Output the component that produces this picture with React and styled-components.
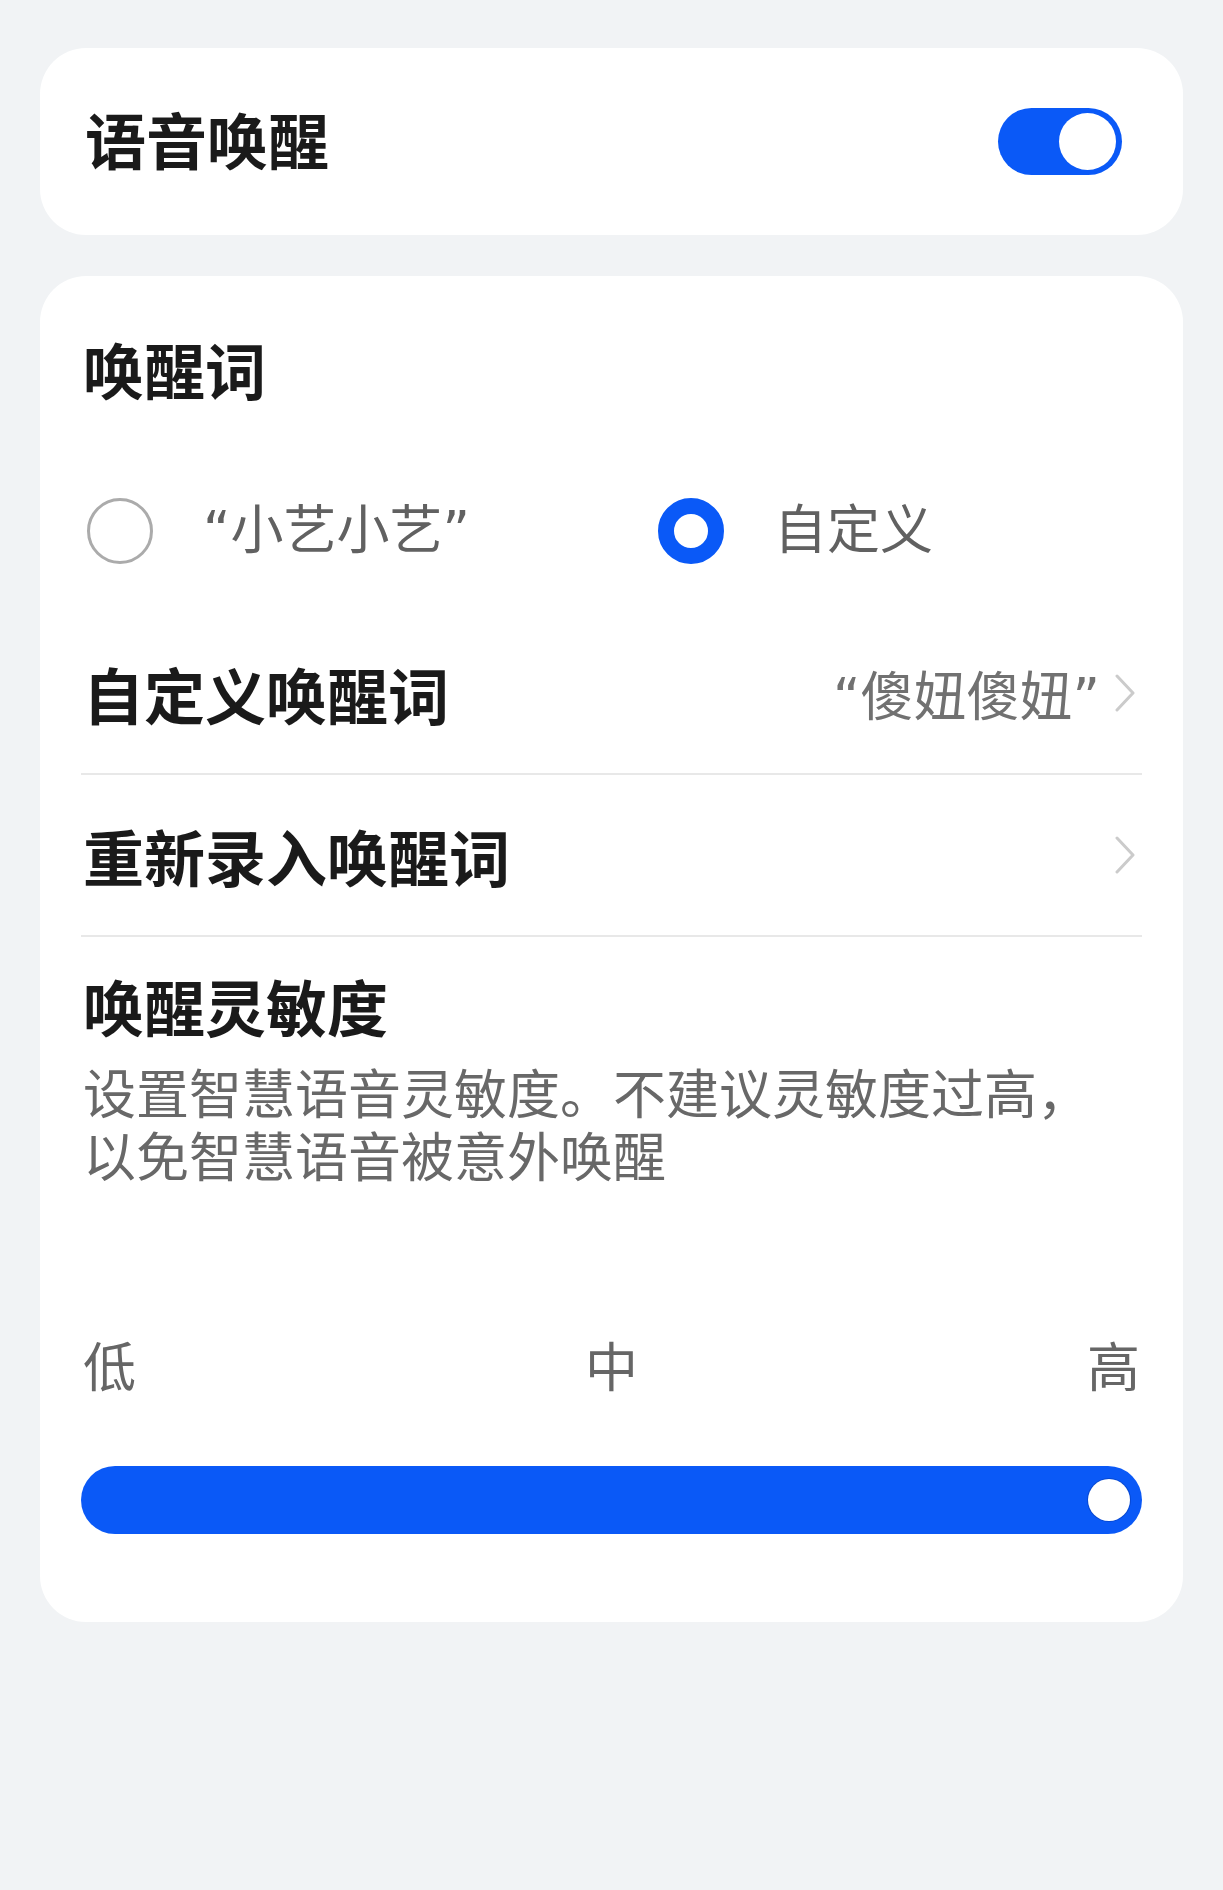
import React, { useState } from 'react';
import styled, { createGlobalStyle } from 'styled-components';

const GlobalStyle = createGlobalStyle`
  body {
    margin: 0;
    background: #f1f3f5;
    font-family: "Noto Sans", "Noto Sans CJK SC", sans-serif;
  }
`;

const Page = styled.div`
  min-height: 1890px;
  box-sizing: border-box;
  padding: 48px 40px;
  display: flex;
  flex-direction: column;
  gap: 41px;
  background: #f1f3f5;
`;

const Card = styled.div`
  background: #fff;
  border-radius: 46px;
  padding: ${p => p.$pad || '0 41px'};
`;

const TopRow = styled.div`
  height: 187px;
  display: flex;
  align-items: center;
  justify-content: space-between;
  padding: 0 61px 0 43px;
`;

const Title = styled.div`
  font-size: 61px;
  font-weight: 700;
  color: #1a1a1a;
  line-height: 80px;
  margin-top: ${p => p.$mt || 0}px;
  padding-left: 2px;
`;

const Switch = styled.div`
  width: 124px;
  height: 67px;
  border-radius: 34px;
  background: #0a59f7;
  display: flex;
  align-items: center;
  justify-content: ${p => (p.$on ? 'flex-end' : 'flex-start')};
  padding: 0 6px;
  box-sizing: border-box;
  cursor: pointer;
`;

const Knob = styled.div`
  width: 57px;
  height: 57px;
  border-radius: 50%;
  background: #fff;
`;

const RadioRow = styled.div`
  display: grid;
  grid-template-columns: 571px 1fr;
  margin-top: 86px;
  padding-bottom: 49px;
  padding-left: 6px;
`;

const Option = styled.label`
  display: flex;
  align-items: center;
  gap: 50px;
  cursor: pointer;
`;

const Radio = styled.span`
  width: 66px;
  height: 66px;
  border-radius: 50%;
  box-sizing: border-box;
  flex: none;
  border: ${p => (p.$checked ? '16px solid #0a59f7' : '3px solid #ababab')};
`;

const OptionText = styled.span`
  font-family: "DejaVu Sans", "Noto Sans CJK SC", sans-serif;
  font-size: 53px;
  color: #616161;
  line-height: 66px;
`;

const ListRow = styled.div`
  height: 160px;
  display: flex;
  align-items: center;
  justify-content: space-between;
  border-bottom: 2px solid #e8e8e8;
  padding-left: 2px;
`;

const RowTitle = styled.div`
  font-size: 61px;
  font-weight: 700;
  color: #1a1a1a;
`;

const RowRight = styled.div`
  display: flex;
  align-items: center;
  gap: 14px;
  font-family: "DejaVu Sans", "Noto Sans CJK SC", sans-serif;
  font-size: 53px;
  color: #717171;
  padding-right: 6px;
`;

const Desc = styled.div`
  margin-top: 13px;
  padding-left: 2px;
  display: flex;
  flex-direction: column;
`;

const DescLine = styled.div`
  font-size: 53px;
  line-height: 63px;
  color: #686868;
`;

const Labels = styled.div`
  display: flex;
  justify-content: space-between;
  font-size: 53px;
  line-height: 64px;
  color: #666;
  margin-top: 147px;
  padding: 0 2px;
`;

const Track = styled.div`
  margin-top: 67px;
  margin-bottom: 88px;
  height: 68px;
  border-radius: 34px;
  background: #0a59f7;
  display: flex;
  align-items: center;
  justify-content: flex-end;
  padding-right: 12px;
`;

const Thumb = styled.div`
  width: 42px;
  height: 42px;
  border-radius: 50%;
  background: #fff;
  box-shadow: 0 0 0 1px rgba(0, 40, 140, 0.35);
`;

const Chevron = () => (
  <svg width="22" height="38" viewBox="0 0 22 38">
    <path d="M3 2 L19 19 L3 36" fill="none" stroke="#cbcbcb" strokeWidth="3" strokeLinecap="round" strokeLinejoin="round" />
  </svg>
);

export default function App() {
  const [on, setOn] = useState(true);
  const [word, setWord] = useState('custom');

  return (
    <>
      <GlobalStyle />
      <Page>
        <Card $pad="0">
          <TopRow>
            <Title>语音唤醒</Title>
            <Switch $on={on} onClick={() => setOn(!on)}>
              <Knob />
            </Switch>
          </TopRow>
        </Card>

        <Card>
          <Title $mt={56}>唤醒词</Title>
          <RadioRow>
            <Option onClick={() => setWord('xiaoyi')}>
              <Radio $checked={word === 'xiaoyi'} />
              <OptionText>“小艺小艺”</OptionText>
            </Option>
            <Option onClick={() => setWord('custom')}>
              <Radio $checked={word === 'custom'} />
              <OptionText>自定义</OptionText>
            </Option>
          </RadioRow>

          <ListRow>
            <RowTitle>自定义唤醒词</RowTitle>
            <RowRight>
              <span>“傻妞傻妞”</span>
              <Chevron />
            </RowRight>
          </ListRow>
          <ListRow>
            <RowTitle>重新录入唤醒词</RowTitle>
            <RowRight>
              <Chevron />
            </RowRight>
          </ListRow>

          <Title $mt={32}>唤醒灵敏度</Title>
          <Desc>
            <DescLine>设置智慧语音灵敏度。不建议灵敏度过高，</DescLine>
            <DescLine>以免智慧语音被意外唤醒</DescLine>
          </Desc>
          <Labels>
            <span>低</span>
            <span>中</span>
            <span>高</span>
          </Labels>
          <Track>
            <Thumb />
          </Track>
        </Card>
      </Page>
    </>
  );
}
